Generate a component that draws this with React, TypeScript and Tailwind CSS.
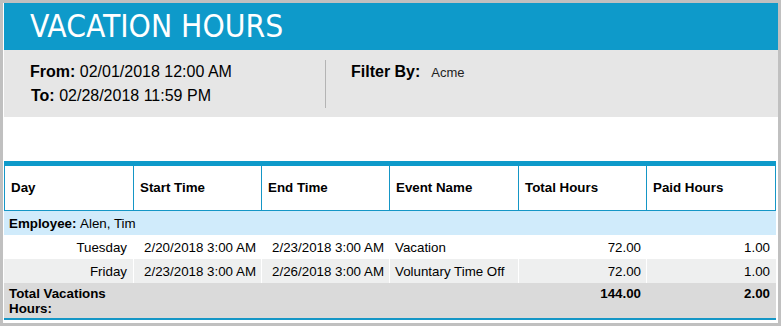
import React from "react";

const cols = "grid grid-cols-[129px_128px_128px_129px_128px_130px]";

export default function App() {
  const rows = [
    { day: "Tuesday", start: "2/20/2018 3:00 AM", end: "2/23/2018 3:00 AM", ev: "Vacation", total: "72.00", paid: "1.00", bg: "bg-white" },
    { day: "Friday", start: "2/23/2018 3:00 AM", end: "2/26/2018 3:00 AM", ev: "Voluntary Time Off", total: "72.00", paid: "1.00", bg: "bg-[#eeefef]" },
  ];
  return (
    <div className="w-[781px] h-[326px] bg-[#c0c0c0] pt-[3px] pl-[3px] pr-[3px] pb-[3px] overflow-hidden" style={{ fontFamily: '"Liberation Sans", Arial, sans-serif' }}>
      <div className="w-[775px] h-[320px] bg-white pl-[1px] flex flex-col">
        <div className="h-[47px] bg-[#0e9aca] flex items-center pl-[26px]">
          <span className="text-white text-[31.5px] leading-none" style={{ fontFamily: '"DejaVu Sans Condensed", "DejaVu Sans", sans-serif', fontStretch: "condensed" }}>VACATION HOURS</span>
        </div>
        <div className="h-[67px] bg-[#e6e6e6] flex pt-[11px] pb-[9px] pl-[26px] text-black">
          <div className="w-[296px] border-r border-[#b4b4b4] flex flex-col text-[16px] leading-[24px] -mt-[1px]">
            <div><span className="font-bold">From:</span> 02/01/2018 12:00 AM</div>
            <div className="pl-[1px]"><span className="font-bold">To:</span> 02/28/2018 11:59 PM</div>
          </div>
          <div className="pl-[25px] flex items-baseline h-[24px] -mt-[1px] leading-[24px]">
            <span className="font-bold text-[16px]">Filter By:</span>
            <span className="text-[13px] text-[#222] ml-[11px]">Acme</span>
          </div>
        </div>
        <div className="h-[44px]" />
        <div className="w-[772px] border-t-[5px] border-[#0e9aca] text-[13.33px] text-black">
          <div className={`${cols} h-[45px] border-b border-[#1596c6]`}>
            {["Day", "Start Time", "End Time", "Event Name", "Total Hours", "Paid Hours"].map((h, i) => (
              <div key={h} className={`flex items-center font-bold border-l border-[#1596c6] pl-[6px] ${i === 5 ? "border-r" : ""}`}>{h}</div>
            ))}
          </div>
          <div className="h-[24px] bg-[#d0ebfb] flex items-center pl-[5px] leading-[15px]">
            <span className="font-bold">Employee:</span>&nbsp;Alen, Tim
          </div>
          {rows.map((r) => (
            <div key={r.day} className={`${cols} h-[24px] ${r.bg} leading-[15px]`}>
              <div className="flex items-center justify-end pr-[6px]">{r.day}</div>
              <div className="flex items-center justify-end pr-[5px] border-l border-white">{r.start}</div>
              <div className="flex items-center justify-end pr-[5px] border-l border-white">{r.end}</div>
              <div className="flex items-center pl-[5px] border-l border-white">{r.ev}</div>
              <div className="flex items-center justify-end pr-[5px] border-l border-white">{r.total}</div>
              <div className="flex items-center justify-end pr-[6px] border-l border-white">{r.paid}</div>
            </div>
          ))}
          <div className={`${cols} h-[37px] bg-[#dadada] border-b-2 border-[#1596c6] leading-[15px] font-bold`}>
            <div className="pl-[5px] pt-[3px]">Total Vacations Hours:</div>
            <div />
            <div />
            <div />
            <div className="pt-[3px] text-right pr-[5px]">144.00</div>
            <div className="pt-[3px] text-right pr-[6px]">2.00</div>
          </div>
        </div>
      </div>
    </div>
  );
}
